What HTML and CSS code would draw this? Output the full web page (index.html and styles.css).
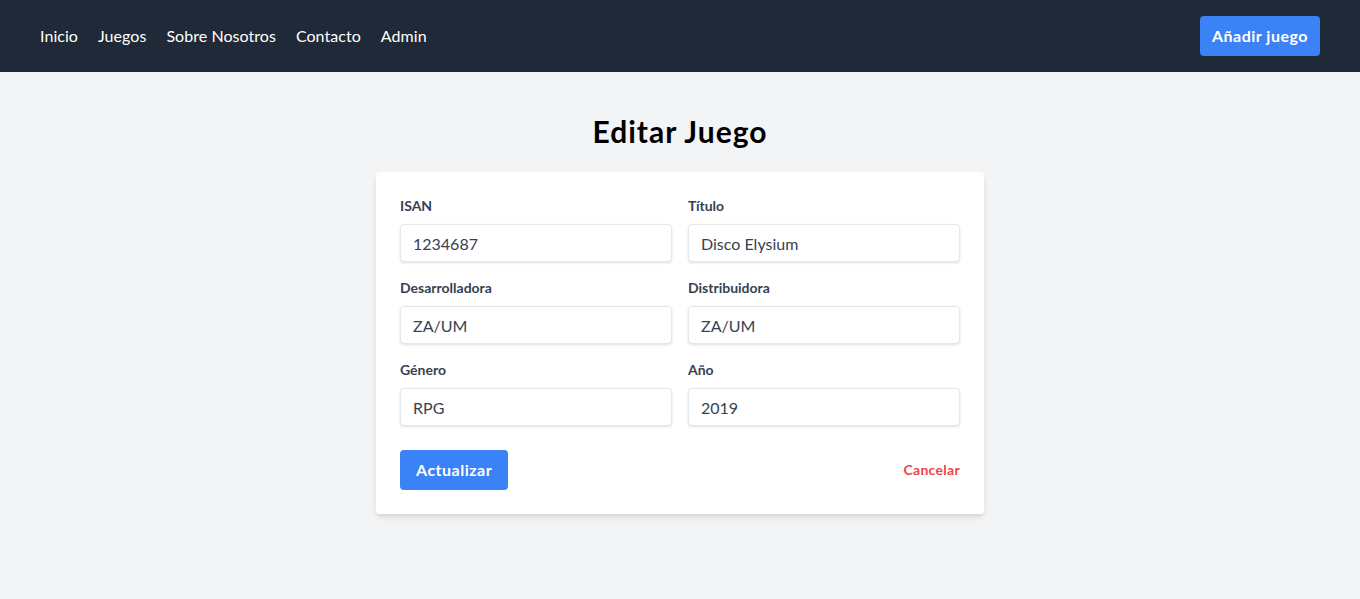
FILE: index.html
```html
<!DOCTYPE html>
<html lang="es">
<head>
<meta charset="utf-8">
<title>Editar Juego</title>
<link rel="stylesheet" href="styles.css">
</head>
<body>
<nav class="navbar">
  <ul class="nav-links">
    <li><a href="#">Inicio</a></li>
    <li><a href="#">Juegos</a></li>
    <li><a href="#">Sobre Nosotros</a></li>
    <li><a href="#">Contacto</a></li>
    <li><a href="#">Admin</a></li>
  </ul>
  <a class="btn btn-primary" href="#">Añadir juego</a>
</nav>
<main class="main">
  <h1 class="page-title">Editar Juego</h1>
  <form class="card">
    <div class="grid">
      <div class="field">
        <label class="label">ISAN</label>
        <input class="input" type="text" value="1234687">
      </div>
      <div class="field">
        <label class="label">Título</label>
        <input class="input" type="text" value="Disco Elysium">
      </div>
      <div class="field">
        <label class="label">Desarrolladora</label>
        <input class="input" type="text" value="ZA/UM">
      </div>
      <div class="field">
        <label class="label">Distribuidora</label>
        <input class="input" type="text" value="ZA/UM">
      </div>
      <div class="field">
        <label class="label">Género</label>
        <input class="input" type="text" value="RPG">
      </div>
      <div class="field">
        <label class="label">Año</label>
        <input class="input" type="text" value="2019">
      </div>
    </div>
    <div class="actions">
      <button class="btn btn-primary" type="button">Actualizar</button>
      <a class="cancel" href="#">Cancelar</a>
    </div>
  </form>
</main>
</body>
</html>
```
FILE: styles.css
```css
* { box-sizing: border-box; }
html, body { margin: 0; padding: 0; }
body {
  background: #f3f4f6;
  font-family: Lato, "Noto Sans", sans-serif;
  color: #111827;
  min-height: 100vh;
}
.navbar {
  background: #1f2937;
  height: 72px;
  padding: 0 40px;
  display: flex;
  align-items: center;
  justify-content: space-between;
}
.nav-links {
  list-style: none;
  margin: 0;
  padding: 0;
  display: flex;
  gap: 20px;
}
.nav-links a {
  color: #ffffff;
  text-decoration: none;
  font-size: 16px;
  line-height: 24px;
  letter-spacing: 0.05px;
}
.btn {
  display: inline-block;
  border: 0;
  border-radius: 4px;
  font-family: inherit;
  font-weight: 700;
  font-size: 16px;
  line-height: 24px;
  padding: 8px 12px;
  letter-spacing: 0.5px;
  text-decoration: none;
  cursor: pointer;
}
.btn-primary { background: #3b82f6; color: #fff; }
.main {
  display: flex;
  flex-direction: column;
  align-items: center;
  padding-top: 41px;
}
.page-title {
  margin: 0 0 23px;
  font-size: 30px;
  line-height: 36px;
  font-weight: 700;
  letter-spacing: 1px;
  color: #000;
}
.card {
  width: 608px;
  background: #fff;
  border-radius: 4px;
  box-shadow: 0 4px 6px -1px rgba(0,0,0,0.1), 0 2px 4px -2px rgba(0,0,0,0.1);
  padding: 24px;
}
.grid {
  display: grid;
  grid-template-columns: 1fr 1fr;
  column-gap: 16px;
}
.field {
  display: flex;
  flex-direction: column;
  margin-bottom: 16px;
}
.label {
  font-size: 14px;
  line-height: 20px;
  font-weight: 700;
  color: #374151;
  margin-bottom: 8px;
}
.input {
  width: 100%;
  height: 38px;
  border: 1px solid #e5e7eb;
  border-radius: 4px;
  box-shadow: 0 1px 3px 0 rgba(0,0,0,0.1), 0 1px 2px -1px rgba(0,0,0,0.1);
  padding: 8px 12px;
  font-family: inherit;
  font-size: 16px;
  line-height: 20px;
  color: #374151;
  outline: none;
}
.actions {
  margin-top: 8px;
  display: flex;
  align-items: center;
  justify-content: space-between;
}
.actions .btn { padding: 8px 16px; }
.cancel {
  color: #ef4444;
  font-weight: 700;
  font-size: 14px;
  line-height: 20px;
  letter-spacing: 0.3px;
  text-decoration: none;
}
```
